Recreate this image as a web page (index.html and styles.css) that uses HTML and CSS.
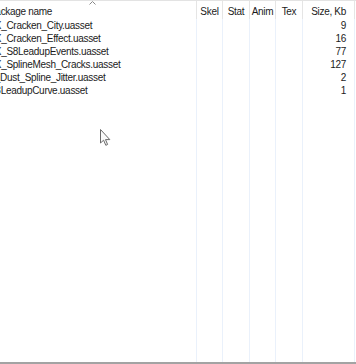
FILE: index.html
```html
<!DOCTYPE html>
<html lang="en">
<head>
    <meta charset="UTF-8">
    <meta name="viewport" content="width=device-width, initial-scale=1.0">
    <title>Packages</title>
    <link rel="stylesheet" href="styles.css">
</head>
<body>
    <div class="list">
        <div class="scroller">
            <!-- Column headers -->
            <div class="row header">
                <div class="cell name">Package name
                    <svg class="sort" width="7" height="4" viewBox="0 0 7 4"><path d="M0.5 3.5 L3.5 0.5 L6.5 3.5" fill="none" stroke="#888" stroke-width="1"/></svg>
                </div>
                <div class="cell">Skel</div>
                <div class="cell">Stat</div>
                <div class="cell">Anim</div>
                <div class="cell">Tex</div>
                <div class="cell num">Size, Kb</div>
            </div>

            <div class="rows">
                <div class="row item">
                    <div class="cell name">FX_Cracken_City.uasset</div>
                    <div class="cell"></div><div class="cell"></div><div class="cell"></div><div class="cell"></div>
                    <div class="cell num">9</div>
                </div>
                <div class="row item">
                    <div class="cell name">FX_Cracken_Effect.uasset</div>
                    <div class="cell"></div><div class="cell"></div><div class="cell"></div><div class="cell"></div>
                    <div class="cell num">16</div>
                </div>
                <div class="row item">
                    <div class="cell name">FX_S8LeadupEvents.uasset</div>
                    <div class="cell"></div><div class="cell"></div><div class="cell"></div><div class="cell"></div>
                    <div class="cell num">77</div>
                </div>
                <div class="row item">
                    <div class="cell name">FX_SplineMesh_Cracks.uasset</div>
                    <div class="cell"></div><div class="cell"></div><div class="cell"></div><div class="cell"></div>
                    <div class="cell num">127</div>
                </div>
                <div class="row item">
                    <div class="cell name">T_Dust_Spline_Jitter.uasset</div>
                    <div class="cell"></div><div class="cell"></div><div class="cell"></div><div class="cell"></div>
                    <div class="cell num">2</div>
                </div>
                <div class="row item">
                    <div class="cell name">S8LeadupCurve.uasset</div>
                    <div class="cell"></div><div class="cell"></div><div class="cell"></div><div class="cell"></div>
                    <div class="cell num">1</div>
                </div>

                <!-- Empty space below the items keeps the column lines -->
                <div class="row filler">
                    <div class="cell name"></div>
                    <div class="cell"></div><div class="cell"></div><div class="cell"></div><div class="cell"></div>
                    <div class="cell num"></div>
                </div>
            </div>
        </div>

        <!-- Mouse pointer -->
        <svg class="pointer" width="12" height="18" viewBox="0 0 12 18">
            <path d="M0.5 0.5 L0.5 14 L3.6 11.2 L5.8 16.3 L7.6 15.5 L5.5 10.6 L9.8 10.6 Z" fill="#fafafa" stroke="#6a6a6a" stroke-width="1" stroke-linejoin="round"/>
        </svg>
    </div>
</body>
</html>
```

FILE: styles.css
```css
/* General Styles */
html, body {
    margin: 0;
    background: #fff;
}

body {
    font-family: "Liberation Sans", Arial, sans-serif;
    font-size: 10px;
    letter-spacing: -0.3px;
    color: #1b1b1b;
    overflow: hidden;
}

.list {
    position: relative;
    width: 356px;
    height: 364px;
    box-sizing: border-box;
    border-top: 1px solid #e3e3e3;
    border-bottom: 2px solid #a3a3a3;
    overflow: hidden;
}

.scroller {
    display: flex;
    flex-direction: column;
    height: 100%;
    margin-left: -13px;
}

.row {
    display: grid;
    grid-template-columns: 210px 26px 27px 26px 27px 52px;
}

.cell {
    border-right: 1px solid #eaf1fb;
    white-space: nowrap;
    overflow: hidden;
    padding-left: 2px;
}

.cell.num {
    text-align: right;
    padding-left: 0;
    padding-right: 8px;
}

/* Header */
.header {
    height: 18px;
}

.header .cell {
    position: relative;
    border-right-color: #e5e5e5;
    padding: 4px 0 0;
    line-height: 13px;
    text-align: center;
}

.header .cell.name {
    padding-left: 2px;
    text-align: left;
}

.header .cell.num {
    padding-right: 8px;
    text-align: right;
}

.sort {
    position: absolute;
    top: 0;
    left: 50%;
    margin-left: -3px;
}

/* Items */
.rows {
    flex: 1;
    display: flex;
    flex-direction: column;
}

.item {
    height: 13px;
    line-height: 13px;
}

.filler {
    flex: 1;
}

.pointer {
    position: absolute;
    left: 100px;
    top: 128px;
}
```
